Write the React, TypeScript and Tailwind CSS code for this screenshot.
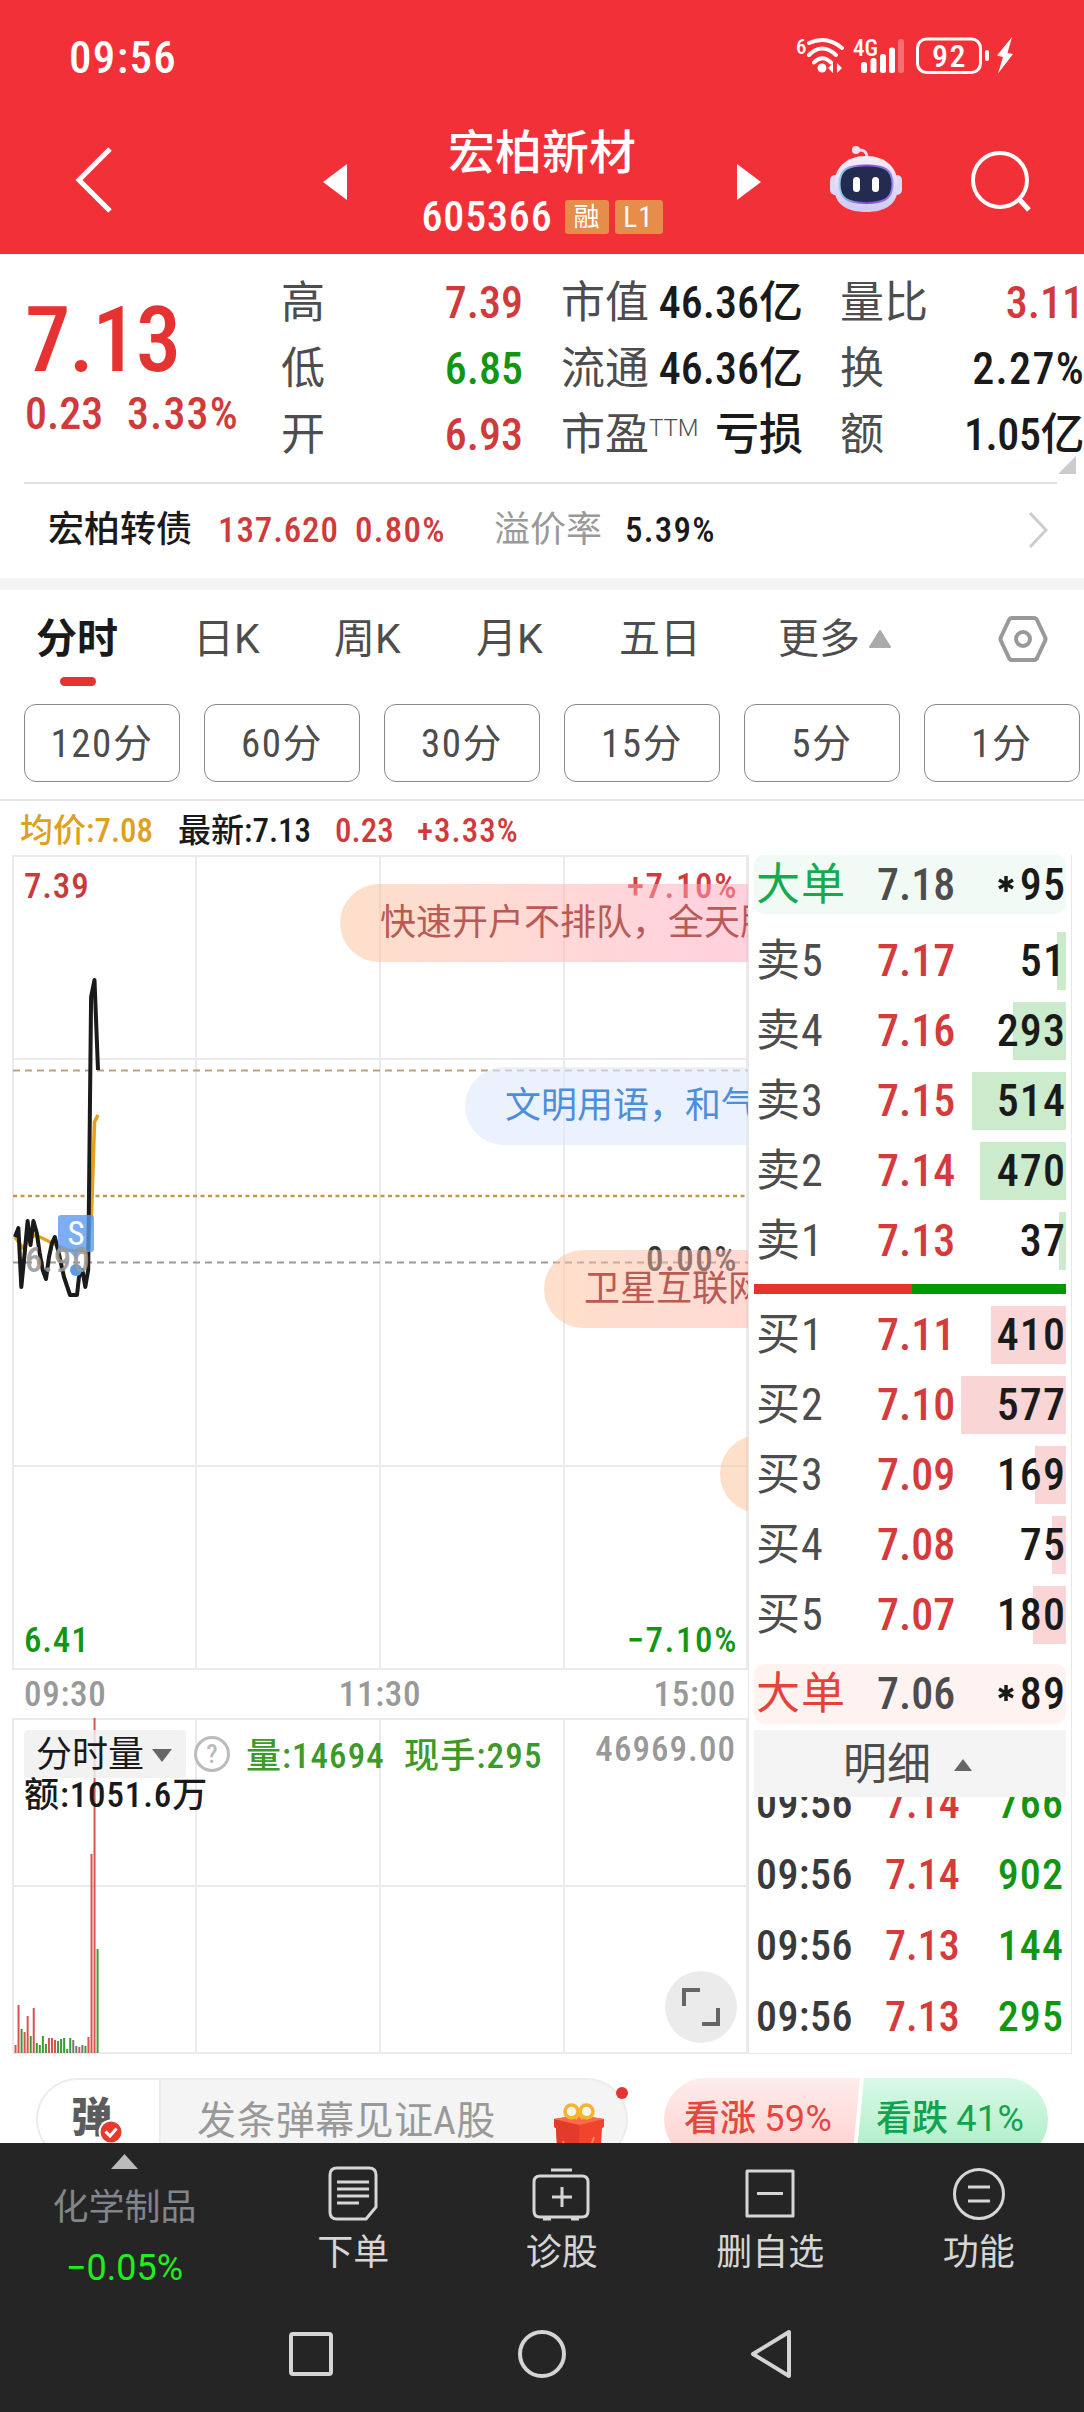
import React from "react";

type Level = { label: string; price: string; volume: number };

const asks: Level[] = [
  { label: "卖5", price: "7.17", volume: 51 },
  { label: "卖4", price: "7.16", volume: 293 },
  { label: "卖3", price: "7.15", volume: 514 },
  { label: "卖2", price: "7.14", volume: 470 },
  { label: "卖1", price: "7.13", volume: 37 },
];

const bids: Level[] = [
  { label: "买1", price: "7.11", volume: 410 },
  { label: "买2", price: "7.10", volume: 577 },
  { label: "买3", price: "7.09", volume: 169 },
  { label: "买4", price: "7.08", volume: 75 },
  { label: "买5", price: "7.07", volume: 180 },
];

const ticks = [
  { time: "09:56", price: "7.14", volume: 766 },
  { time: "09:56", price: "7.14", volume: 902 },
  { time: "09:56", price: "7.13", volume: 144 },
  { time: "09:56", price: "7.13", volume: 295 },
];

const periods = ["120分", "60分", "30分", "15分", "5分", "1分"];

// [height, colour] for every minute since the open
const volumes: [number, string][] = [
  [8, "r"], [48, "r"], [24, "g"], [21, "r"], [37, "r"], [17, "g"], [45, "r"],
  [10, "g"], [8, "g"], [17, "g"], [9, "g"], [15, "r"], [15, "r"], [13, "r"],
  [12, "g"], [14, "g"], [15, "g"], [4, "g"], [15, "g"], [13, "n"], [7, "n"],
  [6, "r"], [8, "n"], [7, "g"], [16, "r"], [199, "r"], [335, "r"], [104, "g"],
];

const barColor: Record<string, string> = {
  r: "#d9534f",
  g: "#3c9a35",
  n: "#777777",
};

const App = () => {
  return (
    <div className="w-[1084px] h-[2412px] overflow-hidden bg-white text-[#1a1a1a] font-medium whitespace-nowrap font-['Roboto_Condensed','Noto_Sans_CJK_SC',sans-serif]">
      <Header />
      <Quote />
      <BondRow />
      <div className="h-3 bg-[#f4f4f4]" />
      <Tabs />
      <div className="flex h-[54px] items-center pl-5 pt-1 text-[33px] leading-none">
        <span className="w-[158px] text-[#dda01f]">均价:7.08</span>
        <span className="w-[157px]">最新:7.13</span>
        <span className="w-[82px] text-[#d03a3a]">0.23</span>
        <span className="tracking-[0.03em] text-[#d03a3a]">+3.33%</span>
      </div>
      <div className="flex h-[1199px]">
        <div className="w-[748px] pl-3">
          <PriceChart />
          <div className="grid h-12 grid-cols-3 items-center pl-3 pr-3 text-[35px] leading-none tracking-[0.02em] text-[#999]">
            <span>09:30</span>
            <span className="text-center">11:30</span>
            <span className="text-right">15:00</span>
          </div>
          <VolumeChart />
        </div>
        <OrderBook />
      </div>
      <CommentBar />
      <BottomBar />
    </div>
  );
};

const Header = () => {
  return (
    <header className="h-[254px] bg-[#f13038] text-white">
      <div className="flex h-[115px] items-center justify-between pl-[69px] pr-[68px]">
        <span className="text-[45px] leading-none tracking-[0.03em]">09:56</span>
        <svg width="220" height="40" viewBox="0 0 220 40" className="-mt-[3px]" fill="none" stroke="#fff">
          <g fill="#fff" stroke="none">
            <text x="0" y="18" fontSize="21">6</text>
            <text x="57" y="20" fontSize="23">4G</text>
            <circle cx="26" cy="32" r="4.5" />
            <path d="M32 32l5-5v10zM46 32l-5-5v10z" />
            <rect x="65" y="26" width="6" height="11" rx="2.5" />
            <rect x="74.5" y="22" width="6" height="15" rx="2.5" />
            <rect x="84" y="18" width="6" height="19" rx="2.5" />
            <rect x="93" y="11.5" width="6" height="25.5" rx="2.5" />
            <rect x="102" y="3" width="6" height="34" rx="2.5" opacity=".3" />
            <rect x="189" y="14" width="4" height="11" rx="2" />
            <path d="M216 1L201 19.500L207 21L202 37.500L217 18L211.500 17Z" />
            <text x="153.500" y="31" fontSize="32" textAnchor="middle" letterSpacing="1.500">92</text>
          </g>
          <path strokeWidth="4" strokeLinecap="round" d="M13 7Q31 -1 46 12M13 19Q26 6 40 19M18 26.500Q26 18 35 26.500" />
          <rect x="121.500" y="3" width="63" height="33.500" rx="9" strokeWidth="3" />
        </svg>
      </div>
      <div className="flex h-[130px] items-center pl-[74px]">
        <svg width="40" height="66" viewBox="0 0 40 66" fill="none" stroke="#fff" strokeWidth="5">
          <path d="M36 2L5 33L36 64" />
        </svg>
        <svg width="24" height="36" viewBox="0 0 24 36" className="ml-[209px] mt-1" fill="#fff">
          <path d="M24 0V36L0 18Z" />
        </svg>
        <div className="flex w-[390px] flex-col items-center">
          <div className="h-[74px] pt-1 text-[47px] leading-[60px]">宏柏新材</div>
          <div className="flex h-12 items-center">
            <span className="mr-3 text-[42px] leading-none tracking-[0.02em]">605366</span>
            <span className="mr-[6px] flex h-[34px] w-[44px] items-center justify-center rounded-[3px] bg-[#e58d4b] text-[26px] font-normal leading-none">
              融
            </span>
            <span className="flex h-[34px] w-[48px] items-center justify-center rounded-[3px] bg-[#e58d4b] text-[29px] font-normal leading-none tracking-[0.04em]">
              L1
            </span>
          </div>
        </div>
        <svg width="24" height="36" viewBox="0 0 24 36" className="mt-1" fill="#fff">
          <path d="M0 0V36L24 18Z" />
        </svg>
        <Robot />
        <svg width="60" height="62" viewBox="0 0 60 62" className="ml-[69px] mt-[1px]" fill="none" stroke="#fff" strokeWidth="4">
          <circle cx="29" cy="30" r="27" />
          <path d="M47 48L58 60" strokeWidth="5" />
        </svg>
      </div>
    </header>
  );
};

const Robot = () => {
  return (
    <svg width="72" height="68" viewBox="0 0 72 68" className="ml-[69px]">
      <defs>
        <linearGradient id="head" x1="0" y1="0" x2="0" y2="1">
          <stop offset="0" stopColor="#f6eefa" />
          <stop offset="1" stopColor="#cfc9f2" />
        </linearGradient>
        <linearGradient id="rim" x1="0" y1="0" x2="1" y2="0">
          <stop offset="0" stopColor="#8fd0ea" />
          <stop offset=".5" stopColor="#8a3fd0" />
          <stop offset="1" stopColor="#8f86e8" />
        </linearGradient>
      </defs>
      <path d="M28 4Q37 3 37 12" fill="none" stroke="#f3dcea" strokeWidth="3" />
      <circle cx="26" cy="4" r="4" fill="#eedff2" />
      <rect x="0" y="29" width="12" height="20" rx="5" fill="#dcd8f6" />
      <rect x="60" y="29" width="12" height="20" rx="5" fill="#dcd8f6" />
      <path d="M36 10C56 10 68 22 68 40C68 58 56 66 36 66C16 66 4 58 4 40C4 22 16 10 36 10Z" fill="url(#head)" />
      <path d="M36 19.500C54 19.500 62.500 23 62.500 38C62.500 53 54 57 36 57C18 57 9.500 53 9.500 38C9.500 23 18 19.500 36 19.500Z" fill="#232c50" stroke="url(#rim)" strokeWidth="2" />
      <rect x="23" y="31" width="7" height="15" rx="3.500" fill="#fff" />
      <rect x="42" y="31" width="7" height="15" rx="3.500" fill="#fff" />
    </svg>
  );
};

const Cell = ({
  label,
  value,
  color = "",
}: {
  label: React.ReactNode;
  value: string;
  color?: string;
}) => (
  <div className="flex h-[66px] items-center justify-between">
    <span className="font-normal text-[#4d4d4d]">{label}</span>
    <span className={color}>{value}</span>
  </div>
);

const Quote = () => {
  return (
    <section className="relative flex h-[228px] text-[44px] leading-none">
      <div className="w-[281px] pl-[25px] pt-9 text-[#e53333]">
        <div className="h-24 text-[91px] leading-[100px] tracking-[-0.02em]">7.13</div>
        <div className="flex h-[54px] items-center pt-[2px] text-[#d03a3a]">
          <span className="w-[102px]">0.23</span>
          <span className="tracking-[0.025em]">3.33%</span>
        </div>
      </div>
      <div className="w-[242px] pt-4">
        <Cell label="高" value="7.39" color="text-[#d03a3a]" />
        <Cell label="低" value="6.85" color="text-[#129612]" />
        <Cell label="开" value="6.93" color="text-[#d03a3a]" />
      </div>
      <div className="ml-[38px] w-[242px] pt-4">
        <Cell label="市值" value="46.36亿" />
        <Cell label="流通" value="46.36亿" />
        <Cell
          label={
            <>
              市盈
              <span className="relative -top-[14px] text-[24px] font-light font-['Roboto']">TTM</span>
            </>
          }
          value="亏损"
        />
      </div>
      <div className="ml-[37px] w-[244px] pt-4">
        <Cell label="量比" value="3.11" color="text-[#d03a3a]" />
        <Cell label="换" value="2.27%" color="tracking-[0.03em] -mr-[1px]" />
        <Cell label="额" value="1.05亿" color="tracking-[-0.01em]" />
      </div>
      <svg width="18" height="18" viewBox="0 0 18 18" className="absolute bottom-2 right-2" fill="#ccc">
        <path d="M18 0V18H0Z" />
      </svg>
    </section>
  );
};

const BondRow = () => {
  return (
    <section className="ml-6 mr-[27px] flex h-[96px] items-center border-t-2 border-[#e0e0e0] pb-[2px] pl-6 pr-[9px] text-[35px] leading-none">
      <span className="w-[170px] text-[36px]">宏柏转债</span>
      <span className="w-[137px] tracking-[0.025em] text-[#d03a3a]">137.620</span>
      <span className="w-[139px] tracking-[0.035em] text-[#d03a3a]">0.80%</span>
      <span className="w-[131px] text-[36px] font-normal text-[#999]">溢价率</span>
      <span className="tracking-[0.035em]">5.39%</span>
      <svg width="20" height="36" viewBox="0 0 20 36" className="ml-auto" fill="none" stroke="#ccc" strokeWidth="3">
        <path d="M2 1L18 18L2 35" />
      </svg>
    </section>
  );
};

const Tabs = () => {
  return (
    <nav className="h-[211px] border-b-2 border-[#e5e5e5] font-normal text-[#4d4d4d]">
      <div className="flex h-24 items-center pl-9 pt-[2px] text-[41px] leading-none font-['Roboto','Noto_Sans_CJK_SC',sans-serif]">
        <div className="relative flex h-full w-[157px] items-center font-bold text-[#1a1a1a]">
          分时
          <span className="absolute bottom-0 left-6 h-[9px] w-9 rounded-full bg-[#e53333]" />
        </div>
        <span className="w-[141px]">日K</span>
        <span className="w-[142px]">周K</span>
        <span className="w-[143px]">月K</span>
        <span className="w-[159px]">五日</span>
        <span>更多</span>
        <svg width="22" height="18" viewBox="0 0 22 18" className="ml-[9px]" fill="#aaa" stroke="#aaa" strokeWidth="2" strokeLinejoin="round">
          <path d="M11 1L21 17H1Z" />
        </svg>
        <svg width="50" height="46" viewBox="0 0 50 46" className="ml-[107px]" fill="none" stroke="#999" strokeWidth="4" strokeLinejoin="round">
          <path d="M14 2H36Q38 2 39 4L47 21Q48 23 47 25L39 42Q38 44 36 44H14Q12 44 11 42L3 25Q2 23 3 21L11 4Q12 2 14 2Z" />
          <circle cx="25" cy="23" r="7" />
        </svg>
      </div>
      <div className="mt-[18px] flex gap-6 pl-6 text-[39px] leading-none">
        {periods.map((p) => (
          <button
            key={p}
            className="flex h-[78px] w-[156px] shrink-0 items-center justify-center rounded-xl border border-[#888] pt-[2px] tracking-[0.04em]"
          >
            {p}
          </button>
        ))}
      </div>
    </nav>
  );
};

const PriceChart = () => {
  return (
    <div className="relative h-[815px] overflow-hidden">
      <svg width="736" height="815" viewBox="12 855 736 815" fill="none">
        <g stroke="#ebebeb" strokeWidth="2">
          <rect x="13" y="856" width="734" height="813" />
          <path d="M196 856V1669M380 856V1669M564 856V1669M13 1059H747M13 1466H747" />
        </g>
        <path d="M13 1070.500H748" stroke="#bfa07a" strokeWidth="2" strokeDasharray="7 5" />
        <path d="M13 1196H748" stroke="#c8964a" strokeWidth="2.500" strokeDasharray="4 3.500" />
        <path d="M13 1262.500H748" stroke="#9a9a9a" strokeWidth="2" strokeDasharray="7 5" />
        <g strokeWidth="3.500" strokeLinejoin="round">
          <polyline
            stroke="#e3a11c"
            points="15,1237 22.700,1248 29,1240 35,1235 42,1238 50,1242 67,1250 87,1253 91.600,1213 94.500,1122 98,1115"
          />
          <polyline
            stroke="#1a1a1a"
            strokeWidth="4"
            points="15,1237 18.400,1228 21.300,1287 24.700,1253 27.600,1221 30.500,1245 33.400,1221 36.800,1233 39.700,1253 42.700,1270 46,1279 49,1257 52,1243 54.800,1237 58,1250 64,1277 70,1295 77,1295 79,1277 82.400,1270 85.300,1287 88.200,1270 91.100,997 94.500,980 98,1070"
          />
        </g>
        <rect x="58" y="1215" width="36" height="37" rx="3" fill="#5a9bed" fillOpacity=".8" />
        <path d="M70 1252H82L76 1259Z" fill="#7cb0f0" />
        <circle cx="76" cy="1270" r="6" fill="#5a9bea" />
        <text x="76" y="1245" fontSize="33" fill="#fff" fontWeight="400" textAnchor="middle">S</text>
        <g fontSize="35" letterSpacing=".8">
          <text x="24" y="898" fill="#c93a3a">7.39</text>
          <text x="738" y="898" fill="#d03a3a" textAnchor="end" letterSpacing="1.600">+7.10%</text>
          <text x="25" y="1272" fill="#999" fillOpacity=".9">6.90</text>
          <text x="738" y="1271" fill="#333" textAnchor="end" letterSpacing="1.500">0.00%</text>
          <text x="24" y="1652" fill="#129612">6.41</text>
          <text x="738" y="1652" fill="#129612" textAnchor="end" letterSpacing="1.600">−7.10%</text>
        </g>
      </svg>
      <div className="absolute left-[328px] top-[29px] h-[78px] w-[600px] rounded-full bg-linear-to-r from-[#fbc196]/50 to-[#ffa6bb]/50 to-60% pl-[40px] text-[36px] font-normal leading-[78px] text-[#b95a55]">
        快速开户不排队，全天服务
      </div>
      <div className="absolute left-[453px] top-[212px] h-[78px] w-[480px] rounded-full bg-[#dfeafc]/60 pl-[40px] text-[36px] font-normal leading-[79px] text-[#4b8fdc]">
        文明用语，和气生财
      </div>
      <div className="absolute left-[532px] top-[395px] h-[78px] w-[400px] rounded-full bg-linear-to-r from-[#fbc196]/50 to-[#ffa6bb]/50 pl-[40px] text-[36px] font-normal leading-[78px] text-[#b95a55]">
        卫星互联网
      </div>
      <div className="absolute left-[708px] top-[580px] h-[78px] w-[300px] rounded-full bg-[#fbc196]/50" />
    </div>
  );
};

const VolumeChart = () => {
  return (
    <div className="relative h-[336px]">
      <svg width="736" height="336" viewBox="12 1718 736 336" className="absolute inset-0" fill="none">
        <g stroke="#ebebeb" strokeWidth="2">
          <rect x="13" y="1719" width="734" height="334" />
          <path d="M196 1719V2053M380 1719V2053M564 1719V2053M13 1886H747" />
        </g>
        {volumes.map(([h, c], i) => (
          <rect key={i} x={14.500 + i * 3.040} y={2053 - h} width="2" height={h} fill={barColor[c]} />
        ))}
      </svg>
      <div className="relative flex h-[60px] items-end pl-3 text-[35px] leading-none">
        <div className="flex h-12 w-[162px] items-center rounded bg-[#f0f0f0]/85 pl-3 pt-[2px]">
          <span className="text-[36px] font-normal">分时量</span>
          <svg width="20" height="13" viewBox="0 0 20 13" className="ml-2" fill="#666">
            <path d="M0 0H20L10 13Z" />
          </svg>
        </div>
        <svg width="36" height="36" viewBox="0 0 36 36" className="mb-[6px] ml-2" fill="none" stroke="#bbb" strokeWidth="3">
          <circle cx="18" cy="18" r="16.500" />
          <text x="18" y="27" fontSize="26" textAnchor="middle" fill="#bbb" stroke="none">?</text>
        </svg>
        <span className="mb-[4px] ml-4 w-[158px] tracking-[0.03em] text-[#3c9a28]">量:14694</span>
        <span className="mb-[4px] tracking-[0.035em] text-[#3c9a28]">现手:295</span>
        <span className="mb-[11px] ml-auto pr-3 tracking-[0.03em] text-[#999]">46969.00</span>
      </div>
      <div className="relative pl-3 pt-[1px] text-[35px] leading-[34px] tracking-[0.025em]">额:1051.6万</div>
      <div className="absolute bottom-[11px] right-[11px] flex size-[72px] items-center justify-center rounded-full bg-[#ebebeb]">
        <svg width="38" height="38" viewBox="0 0 38 38" fill="none" stroke="#666" strokeWidth="4">
          <path d="M2 18V2H18M36 20V36H20" />
        </svg>
      </div>
    </div>
  );
};

const BookRow = ({ label, price, volume, bar }: Level & { bar: string }) => (
  <div className="relative flex h-[70px] items-center pl-[2px]">
    <span
      className={`absolute right-0 top-[6px] h-[58px] ${bar}`}
      style={{ width: Math.round((volume / 577) * 105) }}
    />
    <span className="w-[121px] font-normal text-[#4d4d4d]">{label}</span>
    <span className="tracking-normal text-[#d63a3a]">{price}</span>
    <span className="relative ml-auto">{volume}</span>
  </div>
);

const OrderBook = () => {
  return (
    <div className="h-[1199px] w-[324px] overflow-hidden border border-t-0 border-[#e8e8e8] pl-[5px] pr-[5px] text-[44px] leading-none tracking-[0.025em]">
      <div className="flex h-[59px] items-center rounded-[10px] bg-[#f1faf5] pl-[2px]">
        <span className="w-[121px] font-normal text-[#16aa50]">大单</span>
        <span className="tracking-normal text-[#4d4d4d]">7.18</span>
        <span className="ml-auto">
          <Star />95
        </span>
      </div>
      <div className="mt-3">
        {asks.map((l) => (
          <BookRow key={l.label} {...l} bar="bg-[#cceacc]" />
        ))}
      </div>
      <div className="mt-2 flex h-[10px]">
        <div className="w-[158px] bg-[#e53333]" />
        <div className="flex-1 bg-[#009900]" />
      </div>
      <div className="mt-[6px]">
        {bids.map((l) => (
          <BookRow key={l.label} {...l} bar="bg-[#fad5d5]" />
        ))}
      </div>
      <div className="mt-[14px] flex h-[60px] items-center rounded-[10px] bg-[#fff3f2] pl-[2px]">
        <span className="w-[121px] font-normal text-[#e5433a]">大单</span>
        <span className="tracking-normal text-[#4d4d4d]">7.06</span>
        <span className="ml-auto">
          <Star />89
        </span>
      </div>
      <div className="mt-[6px] flex h-[67px] items-center bg-[#f4f4f4] pl-[89px] pt-[2px] font-normal tracking-normal text-[#4d4d4d]">
        明细
        <svg width="18" height="12" viewBox="0 0 18 12" className="ml-[23px]" fill="#666">
          <path d="M0 12H18L9 0Z" />
        </svg>
      </div>
      <div className="h-[256px] overflow-hidden text-[42px]">
        <div className="-mt-[29px]">
          {ticks.map((t, i) => (
            <div key={i} className="flex h-[71px] items-center pl-[2px]">
              <span className="w-[129px] tracking-[0.01em] text-[#3a3a3a]">{t.time}</span>
              <span className="tracking-normal text-[#d63a3a]">{t.price}</span>
              <span className="ml-auto pr-[2px] text-[#129612]">{t.volume}</span>
            </div>
          ))}
        </div>
      </div>
    </div>
  );
};

const Star = () => (
  <svg width="16" height="16" viewBox="0 0 16 16" className="mr-[6px] inline-block align-[8px]" stroke="#1a1a1a" strokeWidth="3.500">
    <path d="M8 0V16M1 4L15 12M1 12L15 4" />
  </svg>
);

const CommentBar = () => {
  return (
    <div className="relative flex h-[89px] items-start overflow-hidden pl-9 pt-6">
      <div className="flex h-[83px] w-[592px] shrink-0 overflow-hidden rounded-full border-2 border-[#ececec] bg-[#f4f4f4]">
        <div className="relative w-[123px] shrink-0 border-r-2 border-[#ececec] bg-white pl-[33px] pt-[17px] text-[41px] font-black leading-[42px] text-[#5c5c5c]">
          弹
          <svg width="26" height="26" viewBox="0 0 26 26" className="absolute left-[60px] top-[39px]" fill="none">
            <circle cx="13" cy="13" r="11.500" fill="#e63a2e" stroke="#fff" strokeWidth="2" />
            <path d="M7.500 12.500L12 17L18.500 9.500" stroke="#fff" strokeWidth="3" />
          </svg>
        </div>
        <span className="w-[393px] pl-[36px] text-[39px] font-normal leading-[83px] tracking-[0.01em] text-[#999]">
          发条弹幕见证A股
        </span>
        <svg width="50" height="60" viewBox="0 0 50 60" className="mt-[23px]">
          <path d="M0 16L25 12L50 16V24L48 25L46 60H4L2 25L0 24Z" fill="#f0452c" />
          <path d="M0 16L25 22V60H4L2 25L0 24Z" fill="#e23b29" />
          <path d="M0 16L25 12L50 16L25 22Z" fill="#fa6a4c" />
          <path d="M31 60L40 34M40 60L46 42M14 60L9 38" stroke="#fb8a5a" strokeWidth="2" fill="none" />
          <g fill="none" stroke="#f5b32e" strokeWidth="3.500">
            <ellipse cx="17.500" cy="8.500" rx="6.500" ry="6.500" />
            <ellipse cx="32.500" cy="8.500" rx="6.500" ry="6.500" />
            <path d="M25 11L21 16M25 11L29 16" />
          </g>
        </svg>
      </div>
      <span className="absolute left-[616px] top-[33px] size-3 rounded-full bg-[#e53333]" />
      <div className="ml-9 flex h-[83px] w-[384px] shrink-0 overflow-hidden rounded-full text-[36px] leading-[83px]">
        <div className="w-[196px] bg-linear-to-b from-[#fdeceb] to-[#ffcfcc] pl-5 text-[#e5473f] [clip-path:polygon(0_0,100%_0,188px_100%,0_100%)]">
          看涨 <span className="text-[36px] font-normal tracking-[0.01em] font-['Roboto']">59%</span>
        </div>
        <div className="-ml-1 w-[192px] bg-linear-to-b from-[#d9f9e6] to-[#a9ecc6] pl-5 text-[#12a34e] [clip-path:polygon(8px_0,100%_0,100%_100%,0_100%)]">
          看跌 <span className="text-[36px] font-normal tracking-[0.01em] font-['Roboto']">41%</span>
        </div>
      </div>
    </div>
  );
};

const NavItem = ({ label, children }: { label: string; children: React.ReactNode }) => (
  <div className="flex w-[208.5px] flex-col items-center">
    <svg width="60" height="56" viewBox="0 0 60 56" fill="none" stroke="#d6d6d6" strokeWidth="3" strokeLinejoin="round">
      {children}
    </svg>
    <span className="mt-[10px] text-[36px] leading-[44px] text-[#d6d6d6]">{label}</span>
  </div>
);

const BottomBar = () => {
  return (
    <footer className="h-[269px] bg-[#252525] font-normal">
      <div className="flex h-[157px] pt-[22px]">
        <div className="-mt-[11px] flex w-[249px] flex-col items-center">
          <svg width="27" height="15" viewBox="0 0 27 15" fill="#bbb">
            <path d="M0 15H27L13.500 0Z" />
          </svg>
          <span className="mt-[17px] text-[36px] leading-[44px] text-[#80868b]">化学制品</span>
          <span className="mt-[16px] text-[36px] leading-[44px] text-[#1ef01e] font-['Roboto']">−0.05%</span>
        </div>
        <NavItem label="下单">
          <path d="M14 3H46Q53 3 53 10V42L43 54H14Q7 54 7 47V10Q7 3 14 3ZM14 17H46M14 24H46M14 31H46M14 38H36" />
        </NavItem>
        <NavItem label="诊股">
          <path d="M8 11H50Q56 11 56 17V46Q56 52 50 52H8Q2 52 2 46V17Q2 11 8 11ZM19 5H40M30 22V42M20 32H40M11 54H19M39 54H47" />
        </NavItem>
        <NavItem label="删自选">
          <path d="M7 6H53V51H7ZM17 28.500H43" />
        </NavItem>
        <NavItem label="功能">
          <circle cx="30" cy="29" r="24.500" />
          <path d="M19 22H41M19 36H41" />
        </NavItem>
      </div>
      <div className="flex h-[108px] items-center pl-[288px]">
        <svg width="46" height="46" viewBox="0 0 46 46" fill="none" stroke="#d4d4d4" strokeWidth="4">
          <rect x="3" y="3" width="40" height="40" rx="2" />
        </svg>
        <svg width="50" height="50" viewBox="0 0 50 50" className="ml-[183px]" fill="none" stroke="#d4d4d4" strokeWidth="4">
          <circle cx="25" cy="25" r="22" />
        </svg>
        <svg width="44" height="50" viewBox="0 0 44 50" className="ml-[182px]" fill="none" stroke="#d4d4d4" strokeWidth="4" strokeLinejoin="round">
          <path d="M40 3V47L4 25Z" />
        </svg>
      </div>
    </footer>
  );
};

export default App;
